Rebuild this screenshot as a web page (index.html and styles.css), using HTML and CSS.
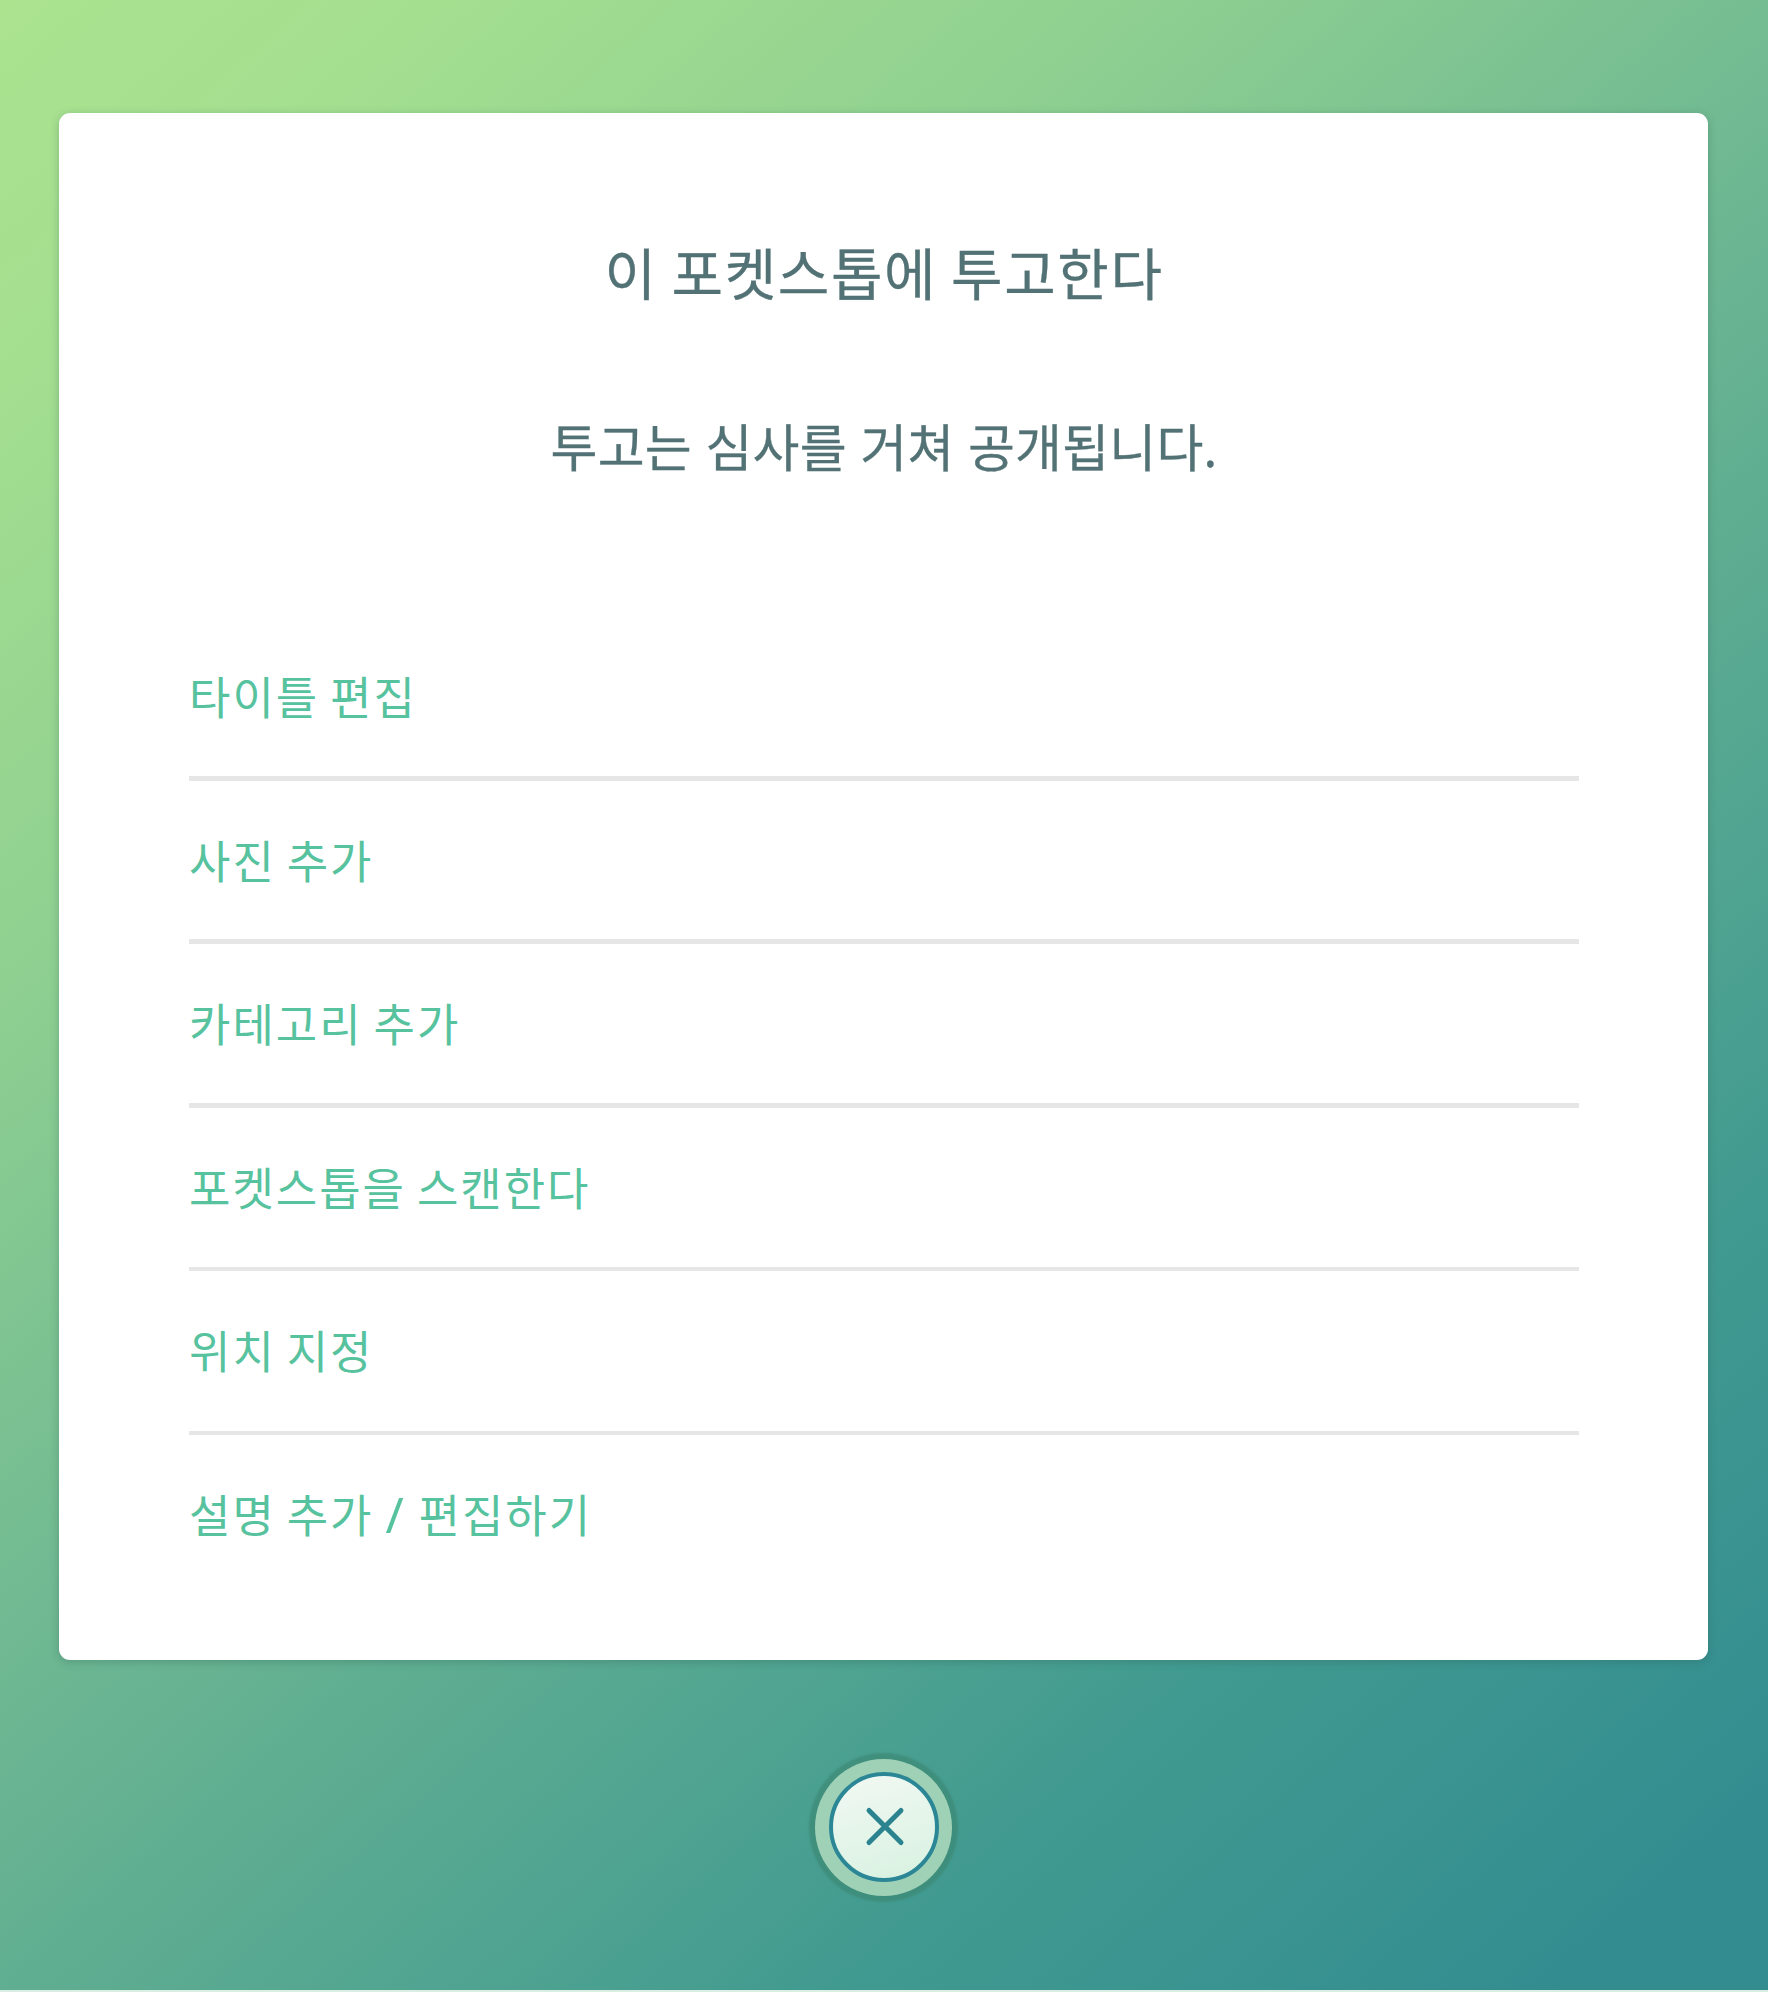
FILE: index.html
```html
<!DOCTYPE html>
<html lang="ko">
<head>
<meta charset="utf-8">
<title>이 포켓스톱에 투고한다</title>
<link rel="stylesheet" href="styles.css">
</head>
<body>
<main class="screen">
  <section class="card">
    <h1 class="title">이 포켓스톱에 투고한다</h1>
    <p class="subtitle">투고는 심사를 거쳐 공개됩니다.</p>
    <ul class="menu">
      <li class="item">타이틀 편집</li>
      <li class="item">사진 추가</li>
      <li class="item">카테고리 추가</li>
      <li class="item item-thin">포켓스톱을 스캔한다</li>
      <li class="item item-thin">위치 지정</li>
      <li class="item">설명 추가 <span class="slash">/</span> 편집하기</li>
    </ul>
  </section>
  <button class="close" aria-label="닫기">
    <svg class="close-icon" viewBox="0 0 110 110" aria-hidden="true">
      <defs>
        <linearGradient id="face" x1="0.3" y1="0" x2="0.6" y2="1">
          <stop offset="0" stop-color="#f0f8f2"/>
          <stop offset="1" stop-color="#daf2e2"/>
        </linearGradient>
      </defs>
      <circle cx="55" cy="55" r="53" fill="url(#face)" stroke="#2b8795" stroke-width="4"/>
      <path d="M40 38.500 72 70.500M72 38.500 40 70.500" stroke="#2b8390" stroke-width="5" stroke-linecap="round"/>
    </svg>
  </button>
</main>
</body>
</html>
```
FILE: styles.css
```css
* { box-sizing: border-box; }
body {
  margin: 0;
  font-family: "Noto Sans", "Noto Sans CJK KR", sans-serif;
}
.screen {
  height: 1992px;
  padding: 113px 60px 0 59px;
  display: flex;
  flex-direction: column;
  align-items: center;
  border-bottom: 2px solid #d9efe4;
  background: linear-gradient(139deg, #abe38f 0%, #a4df90 11%, #8fd091 28%, #6cb692 49%, #419a90 77%, #328c90 96%, #328c90 100%);
}
.card {
  width: 100%;
  height: 1547px;
  padding: 120px 129px 0 130px;
  border-radius: 11px;
  background: #fff;
  box-shadow: 0 2px 8px rgba(40, 90, 80, .3);
}
.title {
  margin: 0;
  text-align: center;
  font-size: 56px;
  font-weight: 400;
  line-height: 80px;
  letter-spacing: 1.6px;
  word-spacing: -2.2px;
  color: #527275;
  -webkit-text-stroke: .3px #527275;
}
.subtitle {
  margin: 94px 0 0;
  text-align: center;
  font-size: 51px;
  line-height: 80px;
  letter-spacing: .2px;
  word-spacing: 0;
  color: #527275;
  -webkit-text-stroke: .3px #527275;
}
.menu {
  margin: 130px 0 0;
  padding: 0;
  list-style: none;
}
.item {
  height: 163.6px;
  padding-top: 51px;
  font-size: 45px;
  line-height: 60px;
  letter-spacing: 2px;
  word-spacing: -2.8px;
  color: #57c29e;
  border-bottom: 5px solid #e6e6e6;
}
.item-thin { border-bottom-width: 4px; }
.item:last-child { border-bottom: 0; }
.slash {
  margin: 0 2px 0 1px;
  font-size: 49px;
  line-height: 1;
}
.close {
  width: 137px;
  height: 137px;
  margin-top: 98.5px;
  padding: 0;
  display: flex;
  align-items: center;
  justify-content: center;
  border: 0;
  border-radius: 50%;
  background: #9fd1b6;
  box-shadow: 0 0 2px 6px rgba(60, 135, 115, .65);
}
.close-icon {
  width: 110px;
  height: 110px;
}
```
